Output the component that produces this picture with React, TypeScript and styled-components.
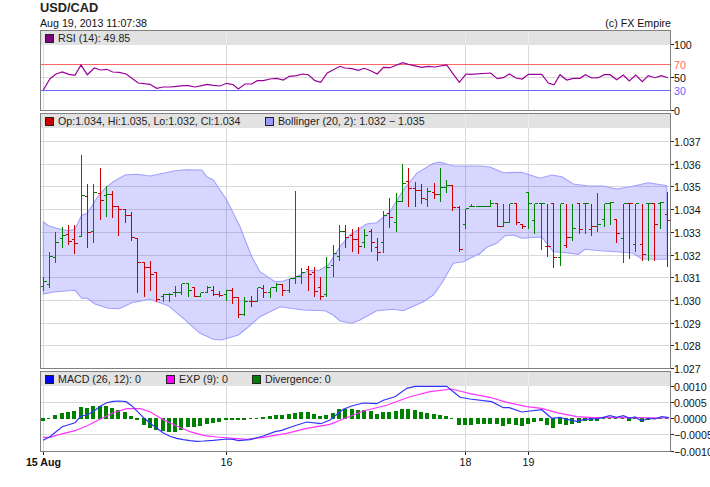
import styled, { createGlobalStyle } from "styled-components";

type Bar = [number, number, number, number, "g" | "r"];
type Pt = [number, number];

const Global = createGlobalStyle`
  html, body {
    margin: 0;
    padding: 0;
    background: #fff;
    overflow: hidden;
  }
`;

const Page = styled.div`
  width: 710px;
  height: 487px;
  overflow: hidden;
  padding: 0 0 0 40px;
  box-sizing: border-box;
  font-family: "Liberation Sans", Arial, sans-serif;
  color: #111;
`;
const Title = styled.div`
  font-size: 12.8px;
  font-weight: bold;
  line-height: 15px;
  color: #222;
`;
const SubRow = styled.div`
  width: 631px;
  display: flex;
  justify-content: space-between;
  padding-top: 1px;
  font-size: 10.67px;
  line-height: 14px;
`;
const Panels = styled.div`
  display: flex;
  flex-direction: column;
  gap: 2px;
`;
const Row = styled.div`
  display: flex;
`;
// the grey legend strip sits under the plot, the legend text over it
const Frame = styled.div<{ $h: number }>`
  position: relative;
  width: 631px;
  height: ${(p) => p.$h}px;
  box-sizing: border-box;
  border: 1px solid #808080;

  &::before {
    content: "";
    position: absolute;
    left: 0;
    right: 0;
    top: 0;
    height: 14px;
    background: #e2e2e2;
  }
`;
const Plot = styled.svg`
  position: relative;
  z-index: 1;
  display: block;
  width: 629px;
  height: 100%;
`;
const Axis = styled.svg`
  display: block;
  width: 39px;
  overflow: visible;
  font-family: "Liberation Sans", Arial, sans-serif;
  font-size: 10.67px;
`;
const Legend = styled.div`
  position: absolute;
  z-index: 2;
  left: 0;
  right: 0;
  top: 0;
  height: 14px;
  display: flex;
  align-items: center;
  padding-left: 4px;
  font-size: 10.67px;
  color: #222;
`;
const LegendItem = styled.span<{ $w?: number }>`
  display: flex;
  align-items: center;
  gap: 4px;
  width: ${(p) => (p.$w ? `${p.$w}px` : "auto")};
`;
const Swatch = styled.i<{ $c: string }>`
  display: block;
  width: 7px;
  height: 7px;
  background: ${(p) => p.$c};
  border: 1px solid #222;
`;
const Dates = styled.svg`
  display: block;
  width: 670px;
  height: 30px;
  margin-left: -40px;
  font-family: "Liberation Sans", Arial, sans-serif;
  font-size: 10.67px;
`;

const GRID = "#d9d9d9";

// everything below is measured in thirds of a pixel off the zoomed reference
const thirds = (pts: Pt[], x0: number, y0: number): Pt[] =>
  pts.map(([x, y]) => [x0 + x / 3, y0 + y / 3]);
const toPath = (pts: Pt[]) => pts.map(([x, y]) => `${x.toFixed(1)},${y.toFixed(1)}`).join(" ");

const barX = (i: number) => Math.floor(43.3 + 6.303 * i) + 0.5;

const rsi: Pt[] = [
  ...thirds(
    [[130,270],[150,236],[168,222],[187,216],[206,223],[225,226],[243,195],[262,224],[283,204],[302,210],[320,208],[338,216],[358,217],[378,222],[415,249],[450,253],[470,265],[490,261],[510,261],[530,259],[550,257],[565,257],[585,261],[605,257],[622,253],[640,256],[660,258],[680,250],[700,254]],
    0, 0
  ),
  ...thirds(
    [[25,177],[45,162],[65,162],[82,152],[100,152],[120,147],[140,145],[160,150],[178,139],[200,137],[218,132],[235,134],[255,152],[272,157],[292,129],[330,109],[345,114],[365,116],[385,121],[403,115],[422,122],[442,132],[460,112],[480,113],[500,105],[518,98],[535,103],[575,112],[595,109],[615,111],[650,105],[668,130],[688,157],[708,132]],
    230, 30
  ),
  ...thirds(
    [[0,223],[62,219],[82,236],[100,233],[118,222],[138,234],[157,237],[175,223],[215,223],[235,249],[252,254],[270,224],[290,240],[310,235],[330,235],[346,224],[365,234],[385,233],[403,224],[420,224],[440,239],[460,225],[478,243],[497,225],[517,245],[535,227],[555,233],[574,227],[594,233]],
    470, 0
  ),
];

const upper: Pt[] = [
  ...thirds(
    [[40,245],[55,257],[80,265],[115,272],[135,268],[155,226],[172,220],[200,175],[225,145],[250,125],[285,105],[320,103],[360,108],[400,100],[435,92],[470,89],[515,90],[530,110],[550,120],[590,180],[630,260],[665,350],[690,395]],
    30, 140
  ),
  ...thirds(
    [[75,425],[100,423],[135,412],[175,392],[210,390],[235,375],[270,320],[300,285],[350,252],[380,248],[420,215],[460,150],[500,100],[550,70],[570,66],[610,78],[690,78]],
    250, 140
  ),
  ...thirds(
    [[60,81],[100,98],[155,97],[210,115],[245,105],[275,110],[310,132],[350,137],[400,138],[440,147],[480,140],[535,128],[590,137]],
    470, 140
  ),
];
const lower: Pt[] = [
  ...thirds(
    [[40,462],[70,456],[135,451],[155,475],[172,475],[195,492],[235,505],[268,506],[305,488],[360,478],[382,485],[415,497],[460,535],[510,580],[550,598],[575,600],[625,585],[650,565],[690,530]],
    30, 140
  ),
  ...thirds(
    [[90,500],[160,510],[225,512],[250,525],[270,543],[305,550],[330,540],[380,512],[430,508],[460,512],[520,485],[550,465],[575,430],[610,370],[640,365],[690,340]],
    250, 140
  ),
  ...thirds(
    [[25,345],[50,322],[80,310],[105,287],[130,285],[155,295],[215,291],[250,335],[290,338],[325,343],[345,328],[400,333],[440,335],[490,340],[515,357],[592,358]],
    470, 140
  ),
];

// top, bottom, open, close
const bars: Bar[] = [
  [408,452,440,425,"g"],[334,442,432,349,"g"],[274,368,352,307,"g"],[259,323,295,285,"g"],[252,314,283,303,"r"],
  [252,341,298,310,"r"],[43,289,289,166,"g"],[130,323,169,277,"r"],[130,308,274,157,"g"],[82,239,160,181,"r"],
  [136,228,166,163,"g"],[151,233,163,199,"r"],[199,287,199,207,"r"],[205,248,207,226,"r"],[214,302,226,293,"r"],
  [295,458,295,367,"r"],[365,470,367,382,"r"],[361,452,382,403,"r"],[395,484,398,479,"r"],[460,485,469,463,"g"],
  [457,485,463,463,"g"],[436,470,457,457,"g"],[430,463,458,430,"g"],[430,470,430,451,"g"],[442,470,442,469,"r"],
  [456,470,469,457,"g"],[436,457,457,441,"g"],[436,465,451,463,"r"],[450,470,463,467,"r"],[448,480,463,451,"g"],
  [442,491,451,472,"r"],[472,533,472,523,"r"],[468,526,523,484,"g"],[466,500,484,484,"r"],[442,484,484,443,"g"],
  [433,471,445,456,"r"],[441,471,456,441,"g"],[427,453,441,432,"g"],[432,465,432,451,"r"],[415,458,451,415,"g"],
  [150,431,415,408,"g"],[381,431,408,397,"g"],[376,452,388,402,"r"],[380,470,397,454,"r"],[408,479,441,468,"r"],
  [349,469,463,382,"g"],[312,410,376,341,"g"],[252,362,349,274,"g"],[252,323,274,292,"r"],[265,335,286,298,"r"],
  [258,340,298,319,"r"],[264,323,308,286,"g"],[264,335,274,307,"r"],[292,362,322,338,"r"],[210,338,307,226,"g"],
  [172,263,220,231,"r"],[157,275,246,185,"g"],[70,185,185,130,"g"],[82,200,124,145,"r"],[123,200,145,151,"r"],
  [130,191,151,175,"r"],[141,200,178,154,"g"],[126,175,157,163,"r"],[81,185,163,142,"g"],[118,158,142,136,"g"],
  [136,212,136,202,"r"],[196,335,202,328,"r"],[205,266,253,205,"g"],[190,200,199,199,"g"],[199,199,199,199,"g"],
  [199,199,199,199,"g"],[178,200,199,190,"g"],[190,260,190,260,"r"],[190,260,259,247,"g"],[190,247,247,190,"g"],
  [190,254,190,248,"r"],[254,266,254,260,"r"],[157,266,157,190,"g"],[190,280,241,190,"g"],[190,329,190,190,"g"],
  [190,350,319,319,"r"],[190,383,190,352,"r"],[190,377,352,190,"g"],[190,323,316,292,"r"],[190,302,292,265,"g"],
  [190,281,190,268,"r"],[190,281,190,190,"g"],[190,287,268,259,"r"],[157,275,259,253,"g"],[190,260,238,190,"g"],
  [184,254,190,186,"g"],[238,308,238,280,"r"],[190,368,295,190,"g"],[190,356,190,190,"r"],[190,335,313,190,"g"],
  [190,362,313,343,"r"],[190,362,190,190,"g"],[190,362,190,253,"r"],[184,266,190,187,"g"],[153,380,223,241,"r"],
];

const macd: Pt[] = [
  ...thirds(
    [[129,226],[150,215],[168,200],[187,185],[206,179],[225,173],[243,153],[262,150],[283,137],[302,123],[320,113],[340,109],[358,108],[378,110],[395,122],[415,142],[433,160],[452,176],[471,190],[490,204],[510,214],[530,220],[550,224],[570,227],[590,229],[610,228],[640,226],[680,222],[700,223]],
    0, 365
  ),
  ...thirds(
    [[25,227],[60,224],[100,213],[135,200],[155,196],[190,184],[230,171],[272,176],[300,165],[340,133],[365,123],[400,114],[440,116],[460,106],[495,95],[530,70],[555,64],[650,64],[670,80],[690,97],[720,102]],
    230, 365
  ),
  ...thirds(
    [[65,110],[100,128],[118,128],[155,141],[215,134],[245,160],[270,157],[290,163],[320,169],[345,163],[385,161],[420,152],[440,157],[460,152],[480,160],[495,156],[515,168],[535,160],[555,162],[575,155],[597,158]],
    470, 365
  ),
];
const signal: Pt[] = [
  ...thirds(
    [[129,217],[150,217],[180,208],[225,197],[262,182],[300,163],[340,143],[380,131],[420,131],[450,140],[490,164],[530,183],[570,200],[610,211],[650,216]],
    0, 365
  ),
  ...thirds(
    [[50,223],[100,217],[170,205],[230,190],[300,178],[340,162],[400,138],[470,121],[540,95],[600,80],[665,72],[720,86]],
    230, 365
  ),
  ...thirds(
    [[60,97],[110,112],[170,125],[215,130],[260,143],[320,155],[370,158],[420,158],[500,158],[597,159]],
    470, 365
  ),
];
// signed bar ends, in thirds of a pixel from the zero line; negative is up
const divergence = [
  10,-1,-12,-18,-22,-25,-37,-33,-40,-39,-40,-33,-26,-22,-10,7,20,29,37,40,41,41,35,28,26,23,17,15,11,7,6,7,
  7,2,2,-7,-10,-13,-13,-15,-19,-22,-22,-16,-10,-13,-19,-31,-31,-31,-28,-28,-23,-16,-22,-22,-25,-31,-31,-28,
  -22,-19,-16,-13,-10,-1,20,20,20,17,17,17,17,23,17,20,23,17,11,8,20,29,17,20,17,14,8,8,8,2,2,2,-1,8,2,11,5,3,-3,1,
];

const vLines = [43.5, 226.5, 465.5, 528.5];
const priceTicks = [
  ["1.037", 141.5],["1.036", 164.5],["1.035", 186.5],["1.034", 209.5],["1.033", 232.5],
  ["1.032", 255.5],["1.031", 277.5],["1.030", 300.5],["1.029", 323.5],["1.028", 345.5],["1.027", 368.5],
] as const;
const rsiTicks = [
  ["100", 44.5, "#111", true],["70", 64.5, "#ff6666", false],["50", 77.5, "#111", true],
  ["30", 90.5, "#6666ff", false],["0", 110.5, "#111", true],
] as const;
const macdTicks = [
  ["0.0010", 386.5],["0.0005", 402.5],["0.0000", 418.5],["\u22120.0005", 434.5],["\u22120.0010", 451.5],
] as const;

// the stretch of each grid line that crosses the grey legend strip reads lighter
function VGrid({ y1, y2 }: { y1: number; y2: number }) {
  return (
    <>
      {vLines.map((x) => (
        <g key={x} shapeRendering="crispEdges">
          <line x1={x} x2={x} y1={y1} y2={y1 + 14} stroke="#ececec" />
          <line x1={x} x2={x} y1={y1 + 14} y2={y2} stroke={GRID} />
        </g>
      ))}
    </>
  );
}
function HLine({ y, c = GRID }: { y: number; c?: string }) {
  return <line x1={41} x2={670} y1={y} y2={y} stroke={c} shapeRendering="crispEdges" />;
}

function Ticks({ items, top, h }: { items: readonly (readonly [string, number, ...unknown[]])[]; top: number; h: number }) {
  return (
    <Axis viewBox={`671 ${top} 39 ${h}`} height={h}>
      {items.map(([label, y, color, tick]) => (
        <g key={label}>
          {tick !== false && (
            <line x1={671} x2={674} y1={y} y2={y} stroke="#222" shapeRendering="crispEdges" />
          )}
          <text x={674} y={y + 4} fill={(color as string) || "#111"}>
            {label}
          </text>
        </g>
      ))}
    </Axis>
  );
}

function RsiPanel() {
  return (
    <Row>
      <Frame $h={81}>
        <Plot viewBox="41 31 629 79">
          <VGrid y1={31} y2={110} />
          <HLine y={77.5} />
          <HLine y={64.5} c="#ff6666" />
          <HLine y={90.5} c="#6666ff" />
          <polyline points={toPath(rsi)} fill="none" stroke="#990099" strokeWidth={1.2} />
        </Plot>
        <Legend>
          <LegendItem>
            <Swatch $c="#800080" />
            RSI (14): 49.85
          </LegendItem>
        </Legend>
      </Frame>
      <Ticks items={rsiTicks} top={30} h={81} />
    </Row>
  );
}

function PricePanel() {
  return (
    <Row>
      <Frame $h={256}>
        <Plot viewBox="41 114 629 254">
          {priceTicks.slice(0, 10).map(([l, y]) => (
            <HLine key={l} y={y} />
          ))}
          <VGrid y1={114} y2={368} />
          <polygon
            points={toPath([...upper, ...[...lower].reverse()])}
            fill="#0000ff"
            fillOpacity={0.16}
            stroke="#a0a0ff"
            strokeWidth={1.1}
          />
          {bars.map(([top, bottom, open, close, c], i) => {
            const x = barX(i);
            const y = (v: number) => Math.floor(140 + v / 3) + 0.5;
            return (
              <g key={i} stroke={c === "g" ? "#008000" : "#cc0000"} shapeRendering="crispEdges">
                <line x1={x} x2={x} y1={y(top)} y2={y(bottom) + 0.5} />
                <line x1={x - 3} x2={x} y1={y(open)} y2={y(open)} />
                <line x1={x} x2={x + 3} y1={y(close)} y2={y(close)} />
              </g>
            );
          })}
        </Plot>
        <Legend>
          <LegendItem $w={220}>
            <Swatch $c="#cc0000" />
            Op:1.034, Hi:1.035, Lo:1.032, Cl:1.034
          </LegendItem>
          <LegendItem>
            <Swatch $c="#9999ff" />
            Bollinger (20, 2): 1.032 − 1.035
          </LegendItem>
        </Legend>
      </Frame>
      <Ticks items={priceTicks} top={113} h={256} />
    </Row>
  );
}

function MacdPanel() {
  return (
    <Row>
      <Frame $h={81}>
        <Plot viewBox="41 372 629 79">
          <VGrid y1={372} y2={451} />
          <HLine y={402.5} />
          <HLine y={434.5} />
          {divergence.map((v, i) => {
            const x = Math.floor(43.3 + 6.303 * i) - 2;
            const h = Math.max(1, Math.abs(v) / 3);
            return (
              <rect
                key={i}
                x={x}
                y={v < 0 ? 418 - h + 1 : 418}
                width={Math.abs(v) < 3 ? 3 : 4}
                height={h}
                fill="#008000"
                shapeRendering="crispEdges"
              />
            );
          })}
          <polyline points={toPath(signal)} fill="none" stroke="#ff33ff" strokeWidth={1.2} />
          <polyline points={toPath(macd)} fill="none" stroke="#3333ff" strokeWidth={1.2} />
        </Plot>
        <Legend>
          <LegendItem $w={121}>
            <Swatch $c="#0000ff" />
            MACD (26, 12): 0
          </LegendItem>
          <LegendItem $w={86}>
            <Swatch $c="#ff00ff" />
            EXP (9): 0
          </LegendItem>
          <LegendItem>
            <Swatch $c="#008000" />
            Divergence: 0
          </LegendItem>
        </Legend>
      </Frame>
      <Ticks items={macdTicks} top={371} h={81} />
    </Row>
  );
}

function DateAxis() {
  const labels = [
    { x: 43.5, t: "15 Aug", bold: true },
    { x: 226.5, t: "16" },
    { x: 465.5, t: "18" },
    { x: 528.5, t: "19" },
  ];
  return (
    <Dates viewBox="0 452 670 30">
      {labels.map((l) => (
        <g key={l.t}>
          <line x1={l.x} x2={l.x} y1={452} y2={455} stroke="#222" shapeRendering="crispEdges" />
          <text x={l.x} y={466} textAnchor="middle" fill="#111" fontWeight={l.bold ? "bold" : "normal"}>
            {l.t}
          </text>
        </g>
      ))}
    </Dates>
  );
}

export default function App() {
  return (
    <Page>
      <Global />
      <Title>USD/CAD</Title>
      <SubRow>
        <span>Aug 19, 2013 11:07:38</span>
        <span>(c) FX Empire</span>
      </SubRow>
      <Panels>
        <RsiPanel />
        <PricePanel />
        <MacdPanel />
      </Panels>
      <DateAxis />
    </Page>
  );
}
